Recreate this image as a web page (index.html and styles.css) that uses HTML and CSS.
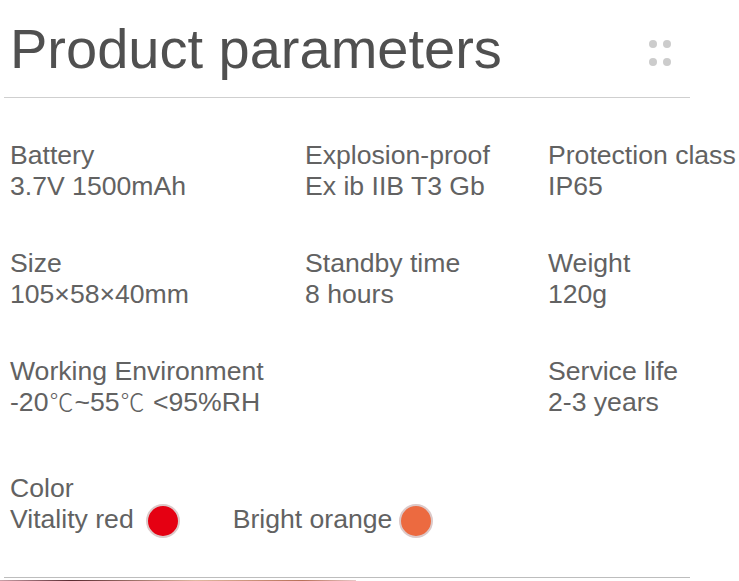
FILE: index.html
```html
<!DOCTYPE html>
<html>
<head>
<meta charset="utf-8">
<link rel="stylesheet" href="styles.css">
</head>
<body>
<div class="page">
  <header class="head">
    <h1 class="title">Product parameters</h1>
    <div class="dots"><span></span><span></span><span></span><span></span></div>
  </header>
  <section class="params">
    <div class="item"><div>Battery</div><div>3.7V 1500mAh</div></div>
    <div class="item"><div>Explosion-proof</div><div>Ex ib IIB T3 Gb</div></div>
    <div class="item"><div>Protection class</div><div>IP65</div></div>
    <div class="item"><div>Size</div><div>105×58×40mm</div></div>
    <div class="item"><div>Standby time</div><div>8 hours</div></div>
    <div class="item"><div>Weight</div><div>120g</div></div>
    <div class="item"><div>Working Environment</div><div>-20<span class="deg">℃</span>~55<span class="deg">℃</span> &lt;95%RH</div></div>
    <div class="item"></div>
    <div class="item"><div>Service life</div><div>2-3 years</div></div>
  </section>
  <section class="colors">
    <div>Color</div>
    <div class="swatches">
      <span class="sw">Vitality red <i class="dot red"></i></span>
      <span class="sw tight">Bright orange <i class="dot orange"></i></span>
    </div>
  </section>
  <div class="foot-line"></div>
  <div class="strip"></div>
</div>
</body>
</html>
```
FILE: styles.css
```css
html, body { margin: 0; padding: 0; background: #fff; }
body { font-family: "Liberation Sans", Arial, sans-serif; color: #626262; }
.page { width: 739px; height: 581px; overflow: hidden; }
.head {
  margin: 0 49px 0 4px;
  height: 98px;
  border-bottom: 1px solid #cfcfcf;
  box-sizing: border-box;
  display: flex;
  justify-content: space-between;
  align-items: flex-start;
}
.title {
  margin: 21px 0 0 6px;
  font-size: 56px;
  line-height: 55px;
  font-weight: normal;
  color: #505050;
}
.dots {
  margin: 40px 19px 0 0;
  display: grid;
  grid-template-columns: 8px 8px;
  gap: 10px 6px;
}
.dots span { width: 8px; height: 8px; border-radius: 50%; background: #cccccc; }
.params {
  margin-top: 42px;
  padding-left: 10px;
  display: grid;
  grid-template-columns: 295px 243px 1fr;
  grid-auto-rows: 62px;
  row-gap: 46px;
  font-size: 26.6px;
  line-height: 31px;
  white-space: nowrap;
}
.item > div { height: 31px; }
.deg {
  font-family: "Noto Sans CJK SC", sans-serif;
  font-weight: 300;
  font-size: 24px;
  line-height: 0;
  margin: 0 1px;
}
.colors {
  margin-top: 55px;
  padding-left: 10px;
  font-size: 26.6px;
  line-height: 31px;
}
.swatches { display: flex; gap: 53px; height: 31px; }
.sw { display: inline-flex; align-items: center; gap: 12px; }
.sw.tight { gap: 7px; }
.dot {
  width: 30px; height: 30px; border-radius: 50%;
  border: 2px solid #dcc9c9;
  display: inline-block;
  margin-top: 2px;
}
.red { background: #e50012; }
.orange { background: #ec6a40; }
.foot-line {
  margin: 42px 49px 0 4px;
  height: 1px;
  background: #bdbdbd;
}
.strip {
  margin-top: 2px;
  height: 1px;
  background: linear-gradient(90deg, #c9a0a8 0%, #5a2a30 20%, #e0b8a0 55%, #b87058 85%, #e8c8c8 100%);
  width: 356px;
}
```
